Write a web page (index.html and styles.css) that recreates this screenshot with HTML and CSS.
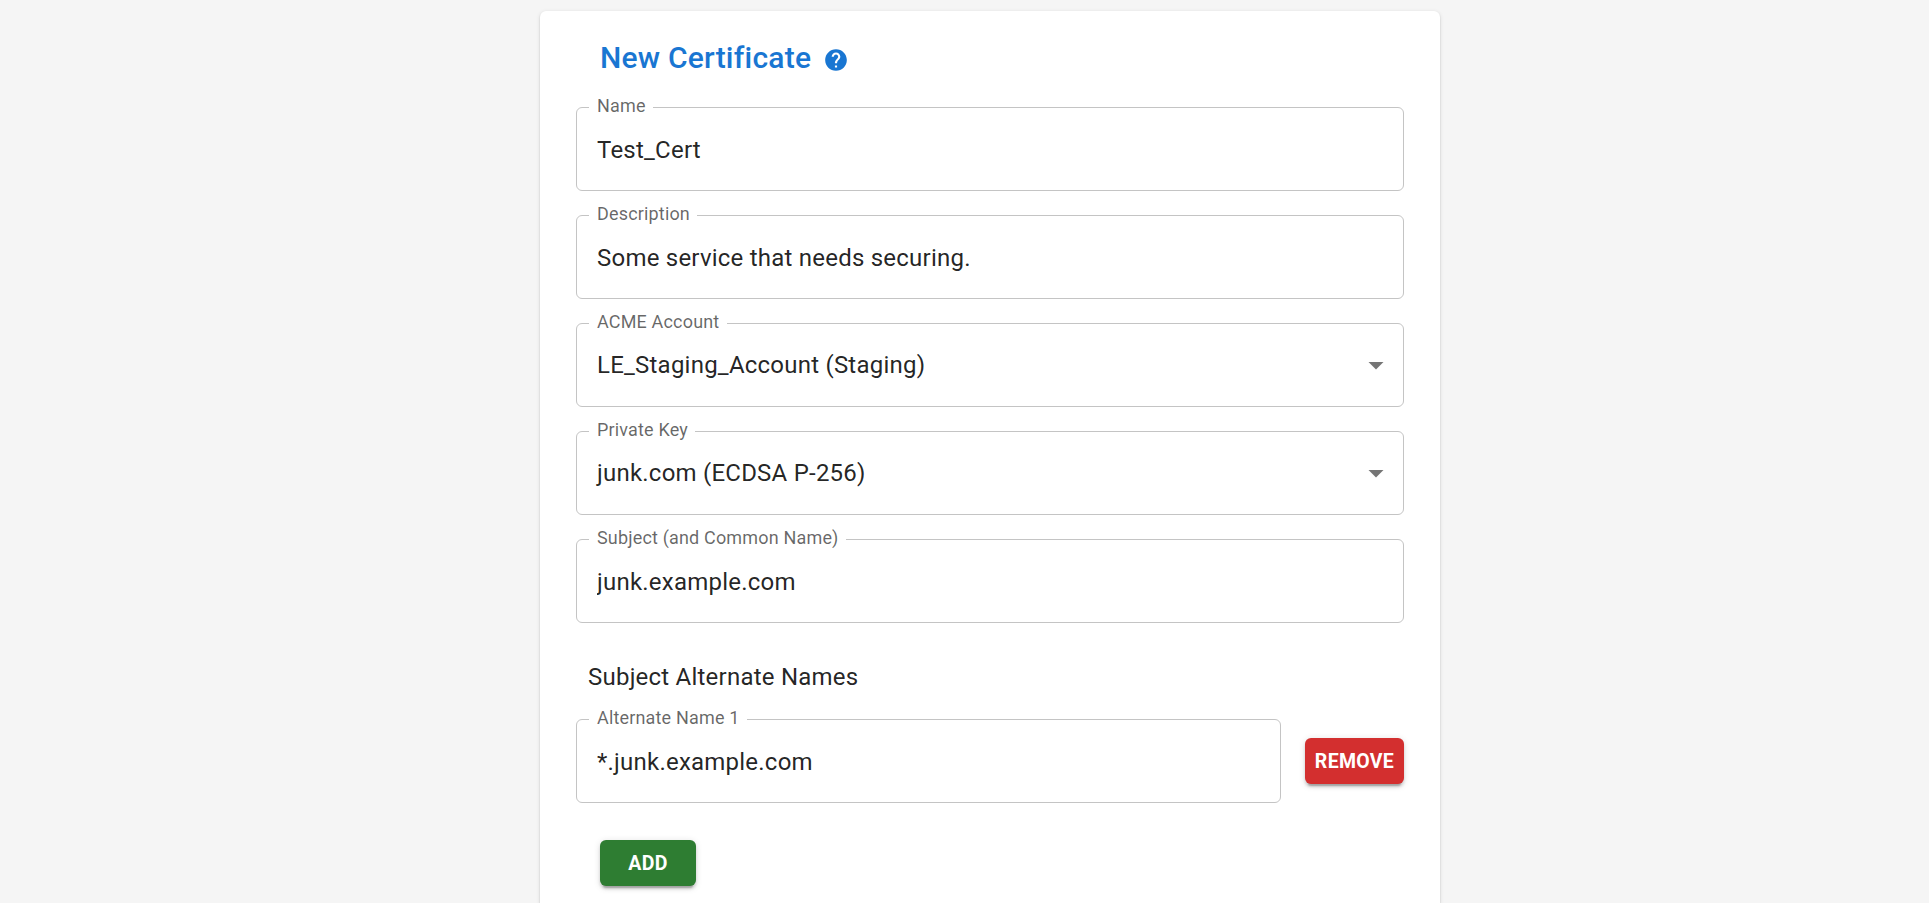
FILE: index.html
```html
<!DOCTYPE html>
<html lang="en">
<head>
<meta charset="utf-8">
<title>New Certificate</title>
<link rel="stylesheet" href="styles.css">
</head>
<body>
<main class="card">
  <header class="card-header">
    <h1 class="title">New Certificate</h1>
    <svg class="help" viewBox="0 0 24 24"><path d="M12 2C6.48 2 2 6.48 2 12s4.480 10 10 10 10-4.480 10-10S17.520 2 12 2zm1 17h-2v-2h2v2zm2.070-7.750l-.9.920C13.450 12.900 13 13.500 13 15h-2v-.5c0-1.100.450-2.100 1.170-2.830l1.240-1.260c.370-.360.590-.860.590-1.410 0-1.100-.9-2-2-2s-2 .9-2 2H8c0-2.210 1.790-4 4-4s4 1.790 4 4c0 .880-.360 1.680-.930 2.250z"/></svg>
  </header>
  <form class="form">
    <div class="field">
      <label class="label" for="name">Name</label>
      <input class="input" id="name" type="text" value="Test_Cert">
    </div>
    <div class="field">
      <label class="label" for="description">Description</label>
      <input class="input" id="description" type="text" value="Some service that needs securing.">
    </div>
    <div class="field">
      <span class="label">ACME Account</span>
      <div class="select">LE_Staging_Account (Staging)</div>
      <svg class="arrow" viewBox="0 0 24 24"><path d="M7 10l5 5 5-5z"/></svg>
    </div>
    <div class="field">
      <span class="label">Private Key</span>
      <div class="select">junk.com (ECDSA P-256)</div>
      <svg class="arrow" viewBox="0 0 24 24"><path d="M7 10l5 5 5-5z"/></svg>
    </div>
    <div class="field">
      <label class="label" for="subject">Subject (and Common Name)</label>
      <input class="input" id="subject" type="text" value="junk.example.com">
    </div>
    <h2 class="subtitle">Subject Alternate Names</h2>
    <div class="row">
      <div class="field">
        <label class="label" for="alt1">Alternate Name 1</label>
        <input class="input" id="alt1" type="text" value="*.junk.example.com">
      </div>
      <button class="button remove" type="button">REMOVE</button>
    </div>
    <button class="button add" type="button">ADD</button>
  </form>
</main>
</body>
</html>
```
FILE: styles.css
```css
* {
  box-sizing: border-box;
}

body {
  display: flex;
  margin: 0;
  height: 100vh;
  padding: 11px 0 0 540px;
  background: #f5f5f5;
  color: rgba(0, 0, 0, 0.87);
  font-family: Roboto, "Liberation Sans", sans-serif;
  font-size: 24px;
  letter-spacing: 0.225px;
}

.card {
  width: 900px;
  padding: 24px 36px 0;
  background: #fff;
  border-radius: 6px 6px 0 0;
  box-shadow: 0 3px 1.5px -1.5px rgba(0, 0, 0, 0.2), 0 1.5px 1.5px rgba(0, 0, 0, 0.14), 0 1.5px 4.5px rgba(0, 0, 0, 0.12);
}

.card-header {
  display: flex;
  align-items: center;
  gap: 12px;
  height: 48px;
  padding-left: 24px;
  color: #1976d2;
}

.title {
  margin: 0 0 3px;
  font-size: 30px;
  font-weight: 500;
  line-height: 48px;
  letter-spacing: 0.225px;
}

.help {
  width: 26px;
  height: 26px;
  margin-top: 2px;
  fill: currentColor;
}

.form {
  display: flex;
  flex-direction: column;
  gap: 24px;
  padding-top: 24px;
}

.field {
  position: relative;
  display: flex;
  align-items: center;
  height: 84px;
  padding: 0 9px 0 20px;
  border: 1px solid #c4c4c4;
  border-radius: 6px;
}

.label {
  position: absolute;
  top: -14px;
  left: 12px;
  padding: 0 7.5px 0 8px;
  background: #fff;
  color: rgba(0, 0, 0, 0.6);
  font-size: 18px;
  line-height: 24px;
  letter-spacing: 0.169px;
}

.input {
  flex: 1;
  min-width: 0;
  height: 36px;
  margin-top: 2px;
  padding: 0;
  border: 0;
  outline: 0;
  background: transparent;
  color: inherit;
  font: inherit;
  letter-spacing: inherit;
}

.select {
  flex: 1;
  line-height: 36px;
}

.arrow {
  width: 36px;
  height: 36px;
  fill: rgba(0, 0, 0, 0.54);
}

.subtitle {
  margin: 12px 0 0;
  padding-left: 12px;
  font-size: 24px;
  font-weight: 400;
  line-height: 36px;
}

.row {
  display: flex;
  align-items: center;
  gap: 24px;
}

.row .field {
  flex: 1;
}

.button {
  height: 46px;
  padding: 0;
  border: 0;
  border-radius: 6px;
  color: #fff;
  font: 700 19.5px Roboto, "Liberation Sans", sans-serif;
  letter-spacing: 0.3px;
  box-shadow: 0 4.5px 1.5px -3px rgba(0, 0, 0, 0.2), 0 3px 3px rgba(0, 0, 0, 0.14), 0 1.5px 7.5px rgba(0, 0, 0, 0.12);
}

.remove {
  width: 99px;
  background: #d32f2f;
}

.add {
  width: 96px;
  margin: 13px 0 0 24px;
  background: #2e7d32;
}
```
